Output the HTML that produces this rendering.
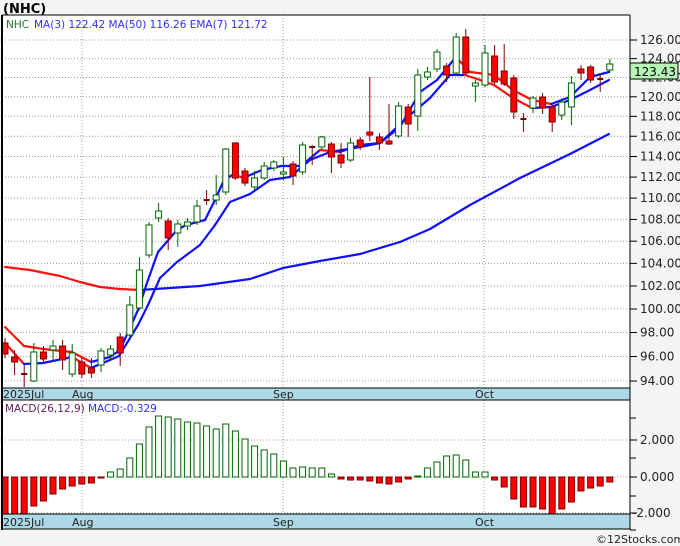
<!DOCTYPE html>
<html><head><meta charset="utf-8"><style>
body{margin:0;background:#f4f4f4;width:680px;height:546px;overflow:hidden;font-family:"DejaVu Sans","Liberation Sans",sans-serif}
svg{position:absolute;left:0;top:0}
</style></head><body>
<svg id="s" width="680" height="546" xmlns="http://www.w3.org/2000/svg" font-family="DejaVu Sans, Liberation Sans, sans-serif">
<text x="3" y="13" font-size="13" font-weight="bold" fill="#000">(NHC)</text>
<rect x="2" y="15" width="628" height="373" fill="#fff"/>
<rect x="2" y="400" width="628" height="114" fill="#fff"/>
<g id="grid" stroke="#999" stroke-dasharray="1,2" stroke-width="1"></g>
<g id="lines"></g>
<g id="cand"></g>
<g id="macd"></g>
<rect x="2" y="388" width="628" height="12" fill="#add8e6" stroke="#000"/>
<rect x="2" y="514" width="628" height="15" fill="#add8e6" stroke="#000"/>
<line x1="2" y1="15" x2="630" y2="15" stroke="#000"/>
<line x1="2" y1="15" x2="2" y2="530" stroke="#000" stroke-width="2"/>
<line x1="630" y1="15" x2="630" y2="530" stroke="#000"/>
<g font-size="11" fill="#222">
<text x="3" y="398">2025Jul</text><text x="72" y="398">Aug</text><text x="273" y="398">Sep</text><text x="475" y="398">Oct</text>
<text x="3" y="526">2025Jul</text><text x="72" y="526">Aug</text><text x="273" y="526">Sep</text><text x="475" y="526">Oct</text>
</g>
<g font-size="10.5">
<text x="6" y="28" fill="#2a7a2a">NHC</text>
<text x="34" y="28" fill="#3030ff">MA(3)  122.42   MA(50)  116.26   EMA(7)  121.72</text>
<text x="5" y="412" fill="#602060">MACD(26,12,9)</text>
<text x="88" y="412" fill="#3030ff">MACD:-0.329</text>
</g>
<g id="axis" font-size="12" fill="#222"></g>
<rect x="630" y="63" width="48" height="16" fill="#b8f5b8" stroke="#000"/>
<text x="634" y="76" font-size="12" fill="#000">123.43</text>
<text x="596" y="543" font-size="11" fill="#222">©12Stocks.com</text>
</svg>
<script>
const NS="http://www.w3.org/2000/svg";
function el(p,t,a){const e=document.createElementNS(NS,t);for(const k in a)e.setAttribute(k,a[k]);document.getElementById(p).appendChild(e);return e;}
const Y=p=>40+1164*(Math.log(126)-Math.log(p));
// grid + axis
for(let p=94;p<=126;p+=2){const y=Y(p);el('grid','line',{x1:2,y1:y,x2:630,y2:y});el('axis','line',{x1:630,y1:y,x2:637,y2:y,stroke:'#000'});
const t=el('axis','text',{x:640,y:y+4});t.textContent=p.toFixed(2);}
for(const x of [82,283,484]){el('grid','line',{x1:x,y1:15,x2:x,y2:388});el('grid','line',{x1:x,y1:400,x2:x,y2:514});}
for(const [y,l] of [[440,'2.000'],[477,'0.000'],[513,'-2.000']]){el('grid','line',{x1:2,y1:y,x2:630,y2:y});el('axis','line',{x1:630,y1:y,x2:637,y2:y,stroke:'#000'});const t=el('axis','text',{x:l[0]=='-'?632:640,y:y+4});t.textContent=l;}
for(const y of [418,458,496,530]) el('axis','line',{x1:630,y1:y,x2:636,y2:y,stroke:'#000'});
// candles [type,top,bot,high,low]
const C=[['r',343,354,338,358],['r',357,362,350,375],['c',374,374,365,387],['g',352,381,343,382],['r',352,359,346,363],['g',346,350,340,362],['r',346,360,340,370],['g',353,374,344,377],['r',362,374,358,378],['r',368,373,358,378],['g',351,365,348,372],['g',349,355,345,360],['r',337,353,333,366],['g',305,335,296,338],['g',270,308,257,310],['g',225,255,222,258],['g',211,218,203,222],['r',221,238,218,250],['g',224,233,220,247],['g',222,226,218,230],['g',206,222,200,225],['c',200,200,190,205],['g',195,200,175,205],['g',149,192,148,195],['r',143,178,142,180],['r',171,183,168,186],['g',178,187,171,190],['g',166,178,162,180],['g',162,168,160,171],['g',172,172,157,180],['r',164,176,161,185],['g',145,172,142,175],['c',147,147,145,165],['g',137,147,136,150],['r',144,157,142,173],['r',155,163,143,168],['g',143,160,138,162],['r',140,147,137,150],['r',132,135,77,141],['r',137,143,133,150],['r',141,144,104,145],['g',106,136,102,138],['r',107,124,104,137],['g',75,116,69,131],['g',72,77,67,80],['g',52,69,49,72],['r',66,75,63,82],['g',37,73,33,75],['r',37,73,29,75],['g',83,86,80,102],['g',53,85,45,87],['r',56,82,45,85],['r',71,84,44,86],['r',78,112,75,119],['c',119,119,113,132],['g',98,108,96,113],['r',97,108,93,114],['r',107,122,104,132],['g',102,115,98,120],['g',83,107,76,125],['r',69,73,65,80],['r',67,80,65,83],['c',79,79,73,92],['g',64,70,59,73]];
C.forEach((c,i)=>{const x=5+9.6*i;const g=c[0]=='g';const col=g?'#006400':'#7a0000';
el('cand','line',{x1:x,y1:c[3],x2:x,y2:c[4],stroke:col});
if(c[0]=='c'){el('cand','line',{x1:x-3,y1:c[1],x2:x+3,y2:c[1],stroke:col,'stroke-width':2});}
else el('cand','rect',{x:x-3,y:c[1],width:6,height:Math.max(c[2]-c[1],2),fill:g?'#fff':'#f00',stroke:col});});
// lines
function line(pts,colorize,fixed){for(let i=0;i<pts.length-1;i++){const [x1,y1]=pts[i],[x2,y2]=pts[i+1];el('lines','line',{x1,y1,x2,y2,stroke:fixed||(y2>y1?'#ff1010':'#1010ff'),'stroke-width':2.2,'stroke-linecap':'round'});}}
line([[5,267],[30,270],[60,276],[80,282],[100,287],[120,289],[140,290]],0,'#ff1010');
line([[140,290],[200,286],[250,279],[283,268],[320,261],[360,254],[400,242],[430,229],[470,205],[520,178],[570,154],[609,134]],0,'#1010ff');
line([[5,327],[24,346],[43,349],[72,352],[91,362],[110,357],[120,350],[138,310],[148,280],[158,252],[177,230],[186,225],[205,220],[215,200],[224,180],[234,174],[243,178],[262,170],[281,166],[301,166],[320,150],[340,152],[360,145],[380,143],[400,127],[420,92],[437,80],[456,57],[470,72],[494,75],[513,90],[532,100],[551,104],[570,97],[590,77],[609,72]]);
line([[5,343],[24,364],[43,363],[72,357],[91,368],[110,360],[119,356],[138,325],[148,305],[160,278],[177,262],[200,245],[215,225],[230,202],[250,194],[270,180],[290,177],[310,160],[330,152],[360,147],[380,143],[410,115],[430,98],[450,75],[465,75],[480,80],[494,85],[513,98],[532,108],[551,107],[570,100],[590,90],[609,80]]);
// macd
const M=[515,515,515,506,501,494,489,486,484,483,478,472,469,458,444,427,416,417,419,422,423,426,429,424,431,439,446,450,454,461,468,467,468,468,474,479,480,480,481,483,484,482,479,476,468,462,456,455,460,472,472,480,487,499,507,507,509,514,509,502,491,488,486,482];
M.forEach((v,i)=>{const x=5+9.6*i;const up=v<477;el('macd','rect',{x:x-3,y:Math.min(v,477),width:6,height:Math.max(Math.abs(v-477),1),fill:up?'#fff':'#f00',stroke:up?'#006400':'#7a0000'});});
</script>
</body></html>
